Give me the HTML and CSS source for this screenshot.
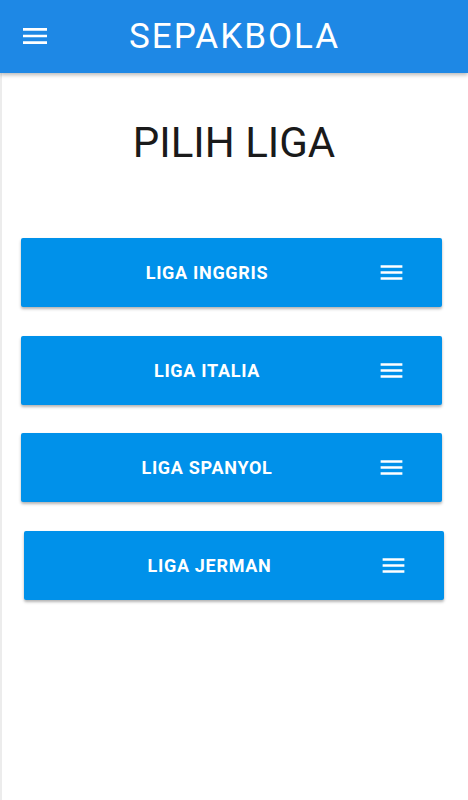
FILE: index.html
```html
<!DOCTYPE html>
<html lang="id">
<head>
<meta charset="utf-8">
<title>Sepakbola</title>
<link rel="stylesheet" href="styles.css">
</head>
<body>
<header class="appbar">
  <svg class="appbar-menu" viewBox="0 0 24 24" aria-hidden="true"><path d="M3 18h18v-2H3v2zm0-5h18v-2H3v2zm0-7v2h18V6H3z" fill="#fff"/></svg>
  <h1 class="appbar-title">SEPAKBOLA</h1>
</header>
<main class="content">
  <h2 class="page-title">PILIH LIGA</h2>
  <div class="league-list">
    <button class="league-btn"><span class="league-name">LIGA INGGRIS</span><svg class="league-icon" viewBox="0 0 24 24" aria-hidden="true"><path d="M3 18h18v-2H3v2zm0-5h18v-2H3v2zm0-7v2h18V6H3z" fill="#fff"/></svg></button>
    <button class="league-btn"><span class="league-name">LIGA ITALIA</span><svg class="league-icon" viewBox="0 0 24 24" aria-hidden="true"><path d="M3 18h18v-2H3v2zm0-5h18v-2H3v2zm0-7v2h18V6H3z" fill="#fff"/></svg></button>
    <button class="league-btn"><span class="league-name">LIGA SPANYOL</span><svg class="league-icon" viewBox="0 0 24 24" aria-hidden="true"><path d="M3 18h18v-2H3v2zm0-5h18v-2H3v2zm0-7v2h18V6H3z" fill="#fff"/></svg></button>
    <button class="league-btn league-btn--shifted"><span class="league-name">LIGA JERMAN</span><svg class="league-icon" viewBox="0 0 24 24" aria-hidden="true"><path d="M3 18h18v-2H3v2zm0-5h18v-2H3v2zm0-7v2h18V6H3z" fill="#fff"/></svg></button>
  </div>
</main>
</body>
</html>
```

FILE: styles.css
```css
* { box-sizing: border-box; }
html, body { margin: 0; padding: 0; height: 100%; }
body {
  font-family: Roboto, "Noto Sans", "Liberation Sans", sans-serif;
  background: #fff;
  display: flex;
  flex-direction: column;
}
.appbar {
  position: relative;
  z-index: 2;
  height: 73px;
  flex: none;
  background: #1e88e5;
  display: flex;
  align-items: center;
  box-shadow: 0 2px 4px rgba(0,0,0,0.28);
}
.appbar-menu {
  position: absolute;
  left: 19px;
  top: 20px;
  width: 32px;
  height: 32px;
}
.appbar-title {
  flex: 1;
  margin: 0;
  text-align: center;
  color: #fff;
  font-weight: 400;
  font-size: 35px;
  letter-spacing: 2px;
  line-height: 1;
  padding-left: 1px;
}
.content {
  flex: 1;
  border-left: 2px solid #ececec;
  display: flex;
  flex-direction: column;
}
.page-title {
  margin: 45px 0 0;
  text-align: center;
  font-weight: 400;
  font-size: 42px;
  color: #1a1a1a;
  line-height: 49px;
  padding-right: 2px;
}
.league-list {
  margin-top: 71px;
  display: flex;
  flex-direction: column;
  gap: 28.7px;
}
.league-btn {
  height: 69px;
  margin: 0 26px 0 19px;
  border: none;
  border-radius: 2px;
  background: #0091ea;
  color: #fff;
  display: flex;
  align-items: center;
  padding: 0 36px 0 16px;
  box-shadow: 0 2px 3px rgba(0,0,0,0.3);
  font-family: inherit;
}
.league-btn--shifted { margin: 0 24px 0 22px; }
.league-name {
  flex: 1;
  text-align: center;
  font-weight: 700;
  font-size: 18px;
  letter-spacing: 0.7px;
}
.league-icon {
  width: 29px;
  height: 29px;
  flex: none;
}
```
